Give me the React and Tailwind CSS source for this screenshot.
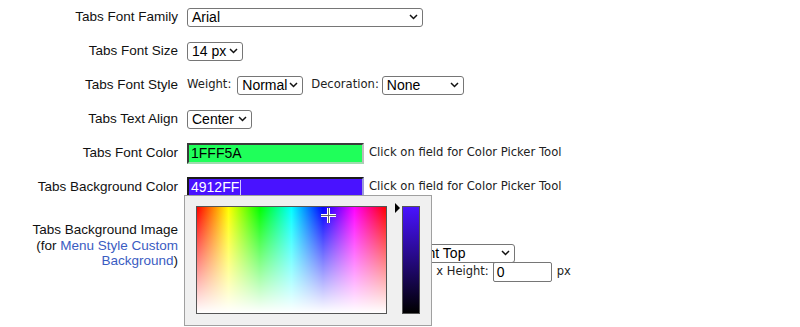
import React from "react";

function Chevron() {
  return (
    <svg width="9" height="6" viewBox="0 0 9 6" className="shrink-0">
      <path d="M1 1 L4.5 4.5 L8 1" fill="none" stroke="#111" strokeWidth="1.5" />
    </svg>
  );
}

function Sel({ w, children }) {
  return (
    <div
      className={`h-[19px] ${w} border border-[#767676] rounded-[3px] bg-white text-[14px] leading-[17px] text-black pl-[4px] pr-[4px] flex items-center justify-between`}
    >
      <span className="whitespace-nowrap">{children}</span>
      <Chevron />
    </div>
  );
}

function Row({ label, children }) {
  return (
    <div className="flex h-[34px] items-center">
      <div className="w-[178px] shrink-0 text-right">{label}</div>
      <div className="ml-[9px] flex items-center">{children}</div>
    </div>
  );
}

const sans = "font-['DejaVu_Sans',Verdana,sans-serif] text-[#222]";

export default function App() {
  return (
    <div className="relative w-[800px] h-[327px] overflow-hidden bg-white text-[13.5px] text-[#111] font-['Liberation_Sans',Arial,sans-serif]">
      <Row label="Tabs Font Family">
        <Sel w="w-[236px]">Arial</Sel>
      </Row>
      <Row label="Tabs Font Size">
        <Sel w="w-[56px]">14 px</Sel>
      </Row>
      <Row label="Tabs Font Style">
        <span className={`${sans} text-[11.6px]`}>Weight:</span>
        <div className="ml-[6px]">
          <Sel w="w-[66px]">Normal</Sel>
        </div>
        <span className={`${sans} text-[11.6px] ml-[8px]`}>Decoration:</span>
        <div className="ml-[3px]">
          <Sel w="w-[82px]">None</Sel>
        </div>
      </Row>
      <Row label="Tabs Text Align">
        <Sel w="w-[65px]">Center</Sel>
      </Row>
      <Row label="Tabs Font Color">
        <div className="w-[177px] h-[21px] border-2 border-[#3a3a3a] border-r-[#bdbdbd] border-b-[#9fdcae] bg-[#1FFF5A] text-black text-[14px] leading-[17px] pl-[2px]">
          1FFF5A
        </div>
        <span className={`${sans} ml-[5px] text-[11.6px]`}>Click on field for Color Picker Tool</span>
      </Row>
      <Row label="Tabs Background Color">
        <div className="w-[177px] h-[21px] border-2 border-[#1a1a1a] border-r-[#9d9dd8] bg-[#4912FF] text-white text-[14px] leading-[17px] pl-[2px] flex items-center">
          <span>4912FF</span>
          <span className="inline-block w-[1px] h-[15px] bg-[#cfc6ff] ml-[1px]"></span>
        </div>
        <span className={`${sans} ml-[5px] text-[11.6px]`}>Click on field for Color Picker Tool</span>
      </Row>

      <div className="flex">
        <div className="w-[178px] shrink-0 text-right pt-[18px] leading-[15.5px]">
          Tabs Background Image
          <br />
          (for <span className="text-[#3a5cc2]">Menu Style Custom</span>
          <br />
          <span className="text-[#3a5cc2]">Background</span>)
        </div>
        <div className="ml-[9px] pt-[17px] flex flex-col">
          <div className="h-[20px] w-[230px] border border-[#767676] rounded-[2px] bg-white"></div>
          <div className="mt-[3px] h-[18px] flex items-center">
            <span className={`${sans} text-[11px]`}>Position:</span>
            <div className="ml-[168px]">
              <Sel w="w-[113px]">Right Top</Sel>
            </div>
          </div>
          <div className="h-[20px] flex items-center">
            <span className={`${sans} text-[11.5px]`}>Width:</span>
            <div className="ml-[5px] h-[20px] w-[196px] border border-[#767676] rounded-[2px] bg-white"></div>
            <span className={`${sans} text-[11.5px] ml-[11px]`}>x Height:</span>
            <div className="ml-[4px] h-[20px] w-[59px] border border-[#767676] rounded-[2px] bg-white text-[14px] leading-[18px] pl-[3px] text-black">
              0
            </div>
            <span className={`${sans} text-[11.5px] ml-[5px]`}>px</span>
          </div>
        </div>
      </div>

      {/* Color picker popup */}
      <div className="absolute left-[184px] top-[195px] w-[248px] h-[131px] bg-[#f0f0f0] border border-[#a0a0a0]">
        <div
          className="absolute left-[11px] top-[10px] w-[191px] h-[108px] border border-[#555]"
          style={{
            background:
              "linear-gradient(to top, #ffffff, rgba(255,255,255,0)), linear-gradient(to right, #ff0000, #ffff00 16.7%, #00ff00 33.3%, #00ffff 50%, #0000ff 66.7%, #ff00ff 83.3%, #ff0000)",
          }}
        >
          <svg className="absolute left-[123px] top-[0px]" width="17" height="17" viewBox="0 0 17 17">
            <path d="M8.5 1 V16 M1 8.5 H16" stroke="#ffffff" strokeWidth="3" />
            <path d="M8.5 1 V16 M1 8.5 H16" stroke="#666666" strokeWidth="1" />
          </svg>
        </div>
        <svg className="absolute left-[210px] top-[7px]" width="6" height="10" viewBox="0 0 6 10">
          <path d="M0 0 L5 5 L0 10 Z" fill="#000" />
        </svg>
        <div
          className="absolute left-[217px] top-[10px] w-[18px] h-[108px] border border-[#555]"
          style={{ background: "linear-gradient(to bottom, #4912FF, #000000)" }}
        ></div>
      </div>
    </div>
  );
}
